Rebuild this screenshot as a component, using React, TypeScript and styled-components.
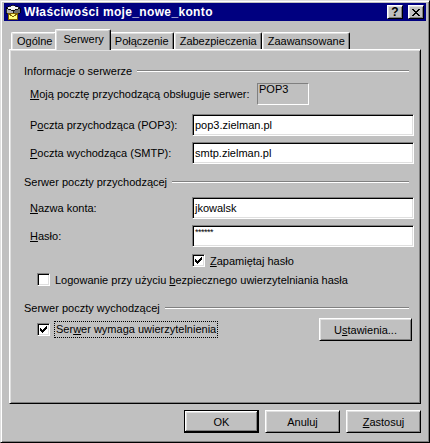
import React from "react";
import styled, { createGlobalStyle, css } from "styled-components";

const GlobalStyle = createGlobalStyle`
  html, body {
    margin: 0;
    padding: 0;
    background: #c0c0c0;
  }
  body {
    font-family: "Liberation Sans", Arial, sans-serif;
    font-size: 11px;
    color: #000;
  }
`;

const raised = css`
  border: 1px solid;
  border-color: #fff #000 #000 #fff;
  box-shadow: inset 1px 1px #dfdfdf, inset -1px -1px #808080;
`;

const sunken = css`
  border: 1px solid;
  border-color: #808080 #fff #fff #808080;
  box-shadow: inset 1px 1px #000, inset -1px -1px #dfdfdf;
`;

const Window = styled.div`
  box-sizing: border-box;
  width: 430px;
  height: 443px;
  background: #c0c0c0;
  border: 1px solid;
  border-color: #dfdfdf #000 #000 #dfdfdf;
  box-shadow: inset 1px 1px #fff, inset -1px -1px #808080;
  padding: 2px 3px 3px 3px;
  display: flex;
  flex-direction: column;
`;

const TitleBar = styled.div`
  height: 18px;
  background: #000080;
  display: flex;
  align-items: center;
  padding: 0 2px 0 1px;
  gap: 3px;
`;

const TitleText = styled.div`
  flex: 1;
  color: #fff;
  font-weight: bold;
  font-size: 12px;
  letter-spacing: 0.35px;
  white-space: nowrap;
`;

const CaptionButton = styled.div<{ $gap?: number }>`
  ${raised};
  box-sizing: border-box;
  width: 16px;
  height: 14px;
  background: #c0c0c0;
  display: flex;
  align-items: center;
  justify-content: center;
  font-weight: bold;
  font-size: 12px;
  line-height: 11px;
  margin-left: ${({ $gap }) => $gap ?? 0}px;
`;

const Body = styled.div`
  padding: 8px 0 0 5px;
  width: 412px;
  display: flex;
  flex-direction: column;
`;

const TabRow = styled.div`
  height: 20px;
  display: flex;
  align-items: flex-end;
  padding-left: 2px;
`;

const Tab = styled.div<{ $active?: boolean }>`
  box-sizing: border-box;
  display: flex;
  align-items: center;
  white-space: nowrap;
  background: #c0c0c0;
  border-left: 1px solid #fff;
  border-top: 1px solid #fff;
  border-right: 1px solid #000;
  border-radius: 2px 2px 0 0;
  box-shadow: inset -1px 0 #808080, inset 1px 1px #dfdfdf;
  ${({ $active }) =>
    $active
      ? css`
          height: 21px;
          margin: 0 -2px -1px -2px;
          padding: 0 6px 2px 7px;
          position: relative;
          z-index: 1;
        `
      : css`
          height: 17px;
          padding: 0 4px 0 5px;
        `}
`;

const Panel = styled.div`
  box-sizing: border-box;
  width: 412px;
  height: 355px;
  border: 1px solid;
  border-color: #fff #000 #000 #fff;
  box-shadow: inset 1px 1px #dfdfdf, inset -1px -1px #808080;
  padding: 14px 6px 0 14px;
  display: flex;
  flex-direction: column;
`;

const GroupHeader = styled.div<{ $mt?: number }>`
  display: flex;
  align-items: center;
  height: 13px;
  gap: 5px;
  margin: ${({ $mt }) => $mt ?? 0}px 5px 0 0;
  white-space: nowrap;
  &::after {
    content: "";
    flex: 1;
    border-top: 1px solid #808080;
    border-bottom: 1px solid #fff;
  }
`;

const InfoRow = styled.div`
  display: grid;
  grid-template-columns: 227px 52px;
  align-items: center;
  height: 22px;
  margin-top: 6px;
  padding-left: 6px;
  white-space: nowrap;
`;

const StaticBox = styled.div`
  box-sizing: border-box;
  height: 22px;
  border: 1px solid;
  border-color: #808080 #fff #fff #808080;
  padding: 0 1px;
  line-height: 11px;
`;

const FormRow = styled.div<{ $mt: number }>`
  display: grid;
  grid-template-columns: 162px 1fr;
  align-items: center;
  margin-top: ${({ $mt }) => $mt}px;
  padding-left: 6px;
  white-space: nowrap;
`;

const Field = styled.div<{ $top?: boolean }>`
  ${sunken};
  box-sizing: border-box;
  height: 22px;
  background: #fff;
  display: flex;
  align-items: ${({ $top }) => ($top ? "flex-start" : "center")};
  padding: ${({ $top }) => ($top ? "2px 2px 0" : "0 2px")};
  overflow: hidden;
  white-space: nowrap;
`;

const Stars = styled.span`
  font-size: 9px;
  line-height: 9px;
  letter-spacing: -0.5px;
`;

const CheckRow = styled.div<{ $mt: number; $indent: number }>`
  display: flex;
  align-items: center;
  gap: 5px;
  height: 13px;
  margin-top: ${({ $mt }) => $mt}px;
  padding-left: ${({ $indent }) => $indent}px;
  white-space: nowrap;
`;

const BoxOfCheck = styled.div`
  ${sunken};
  box-sizing: border-box;
  width: 13px;
  height: 13px;
  flex: none;
  background: #fff;
  display: flex;
  align-items: center;
  justify-content: center;
`;

const LastRow = styled.div`
  display: flex;
  align-items: center;
  justify-content: space-between;
  height: 23px;
  margin: 4px 2px 0 0;
  padding-left: 13px;
`;

const FocusLabel = styled.span`
  border: 1px dotted #000;
  padding: 1px;
  margin-left: -1px;
  line-height: 13px;
  white-space: nowrap;
`;

const Button = styled.div<{ $w?: number; $default?: boolean }>`
  box-sizing: border-box;
  width: ${({ $w }) => $w ?? 75}px;
  height: 23px;
  background: #c0c0c0;
  display: flex;
  align-items: center;
  justify-content: center;
  white-space: nowrap;
  ${({ $default }) =>
    $default
      ? css`
          border: 1px solid #000;
          box-shadow: inset -1px -1px #000, inset 1px 1px #fff,
            inset -2px -2px #808080, inset 2px 2px #dfdfdf;
        `
      : raised}
`;

const ButtonRow = styled.div`
  display: flex;
  justify-content: flex-end;
  gap: 6px;
  margin-top: 6px;
`;

const Key = styled.span`
  text-decoration: underline;
`;

const Pixels = ({ rows }: { rows: string[] }) => (
  <svg width={rows[0].length} height={rows.length} shapeRendering="crispEdges">
    {rows.flatMap((r, y) =>
      r.split("").map((c, x) =>
        c === "#" ? <rect key={`${x}-${y}`} x={x} y={y} width={1} height={1} fill="#000" /> : null
      )
    )}
  </svg>
);

const tick = ["......#", ".....##", "#...###", "##.###.", "#####..", ".###...", "..#...."];
const cross = ["##....##", ".##..##.", "..####..", "...##...", "..####..", ".##..##.", "##....##"];

const Check = ({ on }: { on?: boolean }) => (
  <BoxOfCheck>{on && <Pixels rows={tick} />}</BoxOfCheck>
);

// mailbox + envelope icon in the caption
const AccountIcon = () => (
  <svg width="16" height="16" viewBox="0 0 16 16" shapeRendering="crispEdges">
    <polygon points="1,4 8,1 15,4 8,7" fill="#f0f0f0" stroke="#000" strokeWidth="0.8" />
    <polygon points="1,4 8,7 8,12 1,9" fill="#b0b0b0" stroke="#000" strokeWidth="0.8" />
    <polygon points="8,7 15,4 15,9 8,12" fill="#707070" stroke="#000" strokeWidth="0.8" />
    <rect x="3.5" y="9.5" width="9" height="6" fill="#ffff80" stroke="#806000" />
    <polyline points="3.5,9.5 8,13 12.5,9.5" fill="none" stroke="#806000" />
  </svg>
);

const App = () => {
  return (
    <>
      <GlobalStyle />
      <Window>
        <TitleBar>
          <AccountIcon />
          <TitleText>Właściwości moje_nowe_konto</TitleText>
          <CaptionButton>?</CaptionButton>
          <CaptionButton $gap={2}>
            <Pixels rows={cross} />
          </CaptionButton>
        </TitleBar>
        <Body>
          <TabRow>
            <Tab>Ogólne</Tab>
            <Tab $active>Serwery</Tab>
            <Tab>Połączenie</Tab>
            <Tab>Zabezpieczenia</Tab>
            <Tab>Zaawansowane</Tab>
          </TabRow>
          <Panel>
            <GroupHeader>Informacje o serwerze</GroupHeader>
            <InfoRow>
              <span>
                <Key>M</Key>oją pocztę przychodzącą obsługuje serwer:
              </span>
              <StaticBox>POP3</StaticBox>
            </InfoRow>
            <FormRow $mt={9}>
              <span>
                P<Key>o</Key>czta przychodząca (POP3):
              </span>
              <Field>pop3.zielman.pl</Field>
            </FormRow>
            <FormRow $mt={6}>
              <span>
                <Key>P</Key>oczta wychodząca (SMTP):
              </span>
              <Field>smtp.zielman.pl</Field>
            </FormRow>

            <GroupHeader $mt={11}>Serwer poczty przychodzącej</GroupHeader>
            <FormRow $mt={9}>
              <span>
                <Key>N</Key>azwa konta:
              </span>
              <Field>jkowalsk</Field>
            </FormRow>
            <FormRow $mt={6}>
              <span>
                <Key>H</Key>asło:
              </span>
              <Field $top>
                <Stars>******</Stars>
              </Field>
            </FormRow>
            <CheckRow $mt={7} $indent={168}>
              <Check on />
              <span>
                <Key>Z</Key>apamiętaj hasło
              </span>
            </CheckRow>
            <CheckRow $mt={6} $indent={13}>
              <Check />
              <span>
                Logowanie przy użyciu <Key>b</Key>ezpiecznego uwierzytelniania hasła
              </span>
            </CheckRow>

            <GroupHeader $mt={15}>Serwer poczty wychodzącej</GroupHeader>
            <LastRow>
              <CheckRow $mt={0} $indent={0}>
                <Check on />
                <FocusLabel>
                  Ser<Key>w</Key>er wymaga uwierzytelnienia
                </FocusLabel>
              </CheckRow>
              <Button $w={93}>
                U<Key>s</Key>tawienia...
              </Button>
            </LastRow>
          </Panel>
          <ButtonRow>
            <Button $default>OK</Button>
            <Button>Anuluj</Button>
            <Button>
              <Key>Z</Key>astosuj
            </Button>
          </ButtonRow>
        </Body>
      </Window>
    </>
  );
};

export default App;
